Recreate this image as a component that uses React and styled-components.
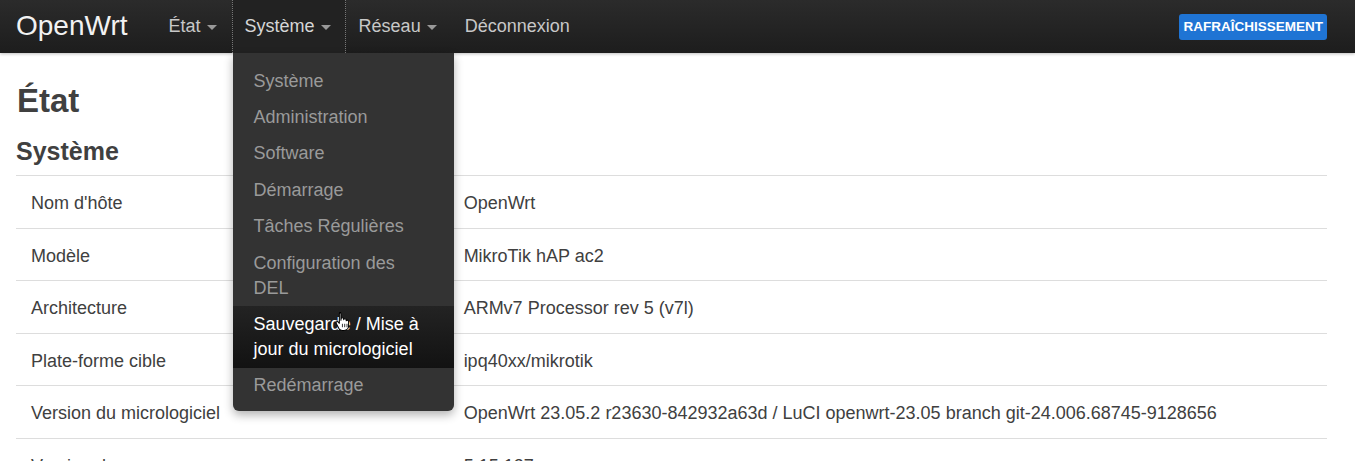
import React from "react";
import styled, { createGlobalStyle } from "styled-components";

const Global = createGlobalStyle`
  html, body { margin: 0; padding: 0; background: #fff; }
  body {
    font-family: "Liberation Sans", Arial, sans-serif;
    font-size: 18px;
    color: #404040;
    overflow: hidden;
  }
`;

const NavBar = styled.header`
  height: 53px;
  display: flex;
  align-items: stretch;
  padding: 0 28px 0 16px;
  background: linear-gradient(to bottom, #2b2b2b, #1d1d1d);
  box-shadow: 0 1px 3px rgba(0,0,0,0.25);
  position: relative;
  z-index: 5;
`;

const Brand = styled.a`
  color: #f2f2f2;
  font-size: 28px;
  display: flex;
  align-items: center;
  margin-right: 28px;
  text-decoration: none;
  padding-bottom: 1px;
`;

const NavList = styled.ul`
  display: flex;
  list-style: none;
  margin: 0;
  padding: 0;
  flex: 1;
`;

const NavItem = styled.li`
  position: relative;
  display: flex;
  align-items: center;
  padding: 0 14px 1px 12px;
  color: ${p => (p.$active ? "#d6d6d6" : "#c8c8c8")};
  background: ${p => (p.$active ? "#222" : "transparent")};
  border-left: 1px dotted ${p => (p.$active ? "#777" : "transparent")};
  border-right: 1px dotted ${p => (p.$active ? "#777" : "transparent")};
  font-size: 18px;
  white-space: nowrap;
`;

const Caret = styled.span`
  display: inline-block;
  width: 0;
  height: 0;
  margin-left: 6px;
  margin-top: 2px;
  border-left: 5px solid transparent;
  border-right: 5px solid transparent;
  border-top: 5px solid #999;
`;

const Dropdown = styled.ul`
  position: absolute;
  top: 100%;
  left: 0;
  width: 221px;
  margin: 0;
  padding: 10px 0 7px;
  list-style: none;
  background: #333;
  border-radius: 0 0 6px 6px;
  box-shadow: 0 4px 10px rgba(0,0,0,0.3);
  z-index: 10;
`;

const DropItem = styled.li`
  padding: 5.7px 21px;
  line-height: 25px;
  font-size: 18px;
  white-space: normal;
  color: ${p => (p.$hover ? "#fff" : "#9a9a9a")};
  background: ${p => (p.$hover ? "linear-gradient(to bottom, #232323, #121212)" : "transparent")};
  position: relative;
`;

const RefreshButton = styled.button`
  align-self: center;
  height: 26px;
  padding: 0 4px;
  border: none;
  border-radius: 3px;
  background: #1f74d4;
  color: #fff;
  font-family: "Liberation Sans", Arial, sans-serif;
  font-weight: bold;
  font-size: 13.5px;
`;

const Main = styled.main`
  padding: 0 28px 0 16px;
`;

const Title = styled.h2`
  margin: 28px 0 0 1px;
  font-size: 33px;
  line-height: 40px;
  font-weight: bold;
  color: #404040;
`;

const SectionTitle = styled.h3`
  margin: 15px 0 9px;
  font-size: 25px;
  line-height: 30px;
  font-weight: bold;
  color: #404040;
`;

const Table = styled.table`
  width: 100%;
  border-collapse: collapse;
`;

const Row = styled.tr`
  border-top: 1px solid #ddd;
`;

const Cell = styled.td`
  padding: 16px 15px 12px;
  line-height: 23.6px;
  font-size: 18px;
  color: #404040;
  width: ${p => p.$w || "auto"};
  vertical-align: top;
`;

const Pointer = styled.svg`
  position: absolute;
  left: 102px;
  top: 5px;
  pointer-events: none;
`;

const rows = [
  ["Nom d'hôte", "OpenWrt"],
  ["Modèle", "MikroTik hAP ac2"],
  ["Architecture", "ARMv7 Processor rev 5 (v7l)"],
  ["Plate-forme cible", "ipq40xx/mikrotik"],
  ["Version du micrologiciel", "OpenWrt 23.05.2 r23630-842932a63d / LuCI openwrt-23.05 branch git-24.006.68745-9128656"],
  ["Version du noyau", "5.15.137"],
];

const menu = [
  "Système",
  "Administration",
  "Software",
  "Démarrage",
  "Tâches Régulières",
  "Configuration des DEL",
  "Sauvegarde / Mise à jour du micrologiciel",
  "Redémarrage",
];

function HandCursor() {
  return (
    <Pointer width="16" height="21" viewBox="0 0 14 18">
      <path
        d="M4 1.2c.7 0 1.2.5 1.2 1.2V8l.1-1.3c.1-.6.6-1 1.2-1 .6 0 1.1.5 1.1 1.1v.6c.1-.5.6-.9 1.1-.9.6 0 1.1.5 1.1 1.1v.8c.2-.4.6-.6 1-.6.6 0 1.1.5 1.1 1.1v3.6c0 2.4-1.6 4.3-4 4.3H6.3c-1.3 0-2.2-.6-2.9-1.6L1.1 10.8c-.4-.6-.2-1.3.3-1.6.5-.3 1.1-.2 1.5.3l.9 1.1V2.4c0-.7.5-1.2 1.2-1.2z"
        fill="#fff"
        stroke="#000"
        strokeWidth="0.9"
        strokeLinejoin="round"
      />
      <path d="M6.5 11v3M8.5 11v3M10.5 11v3" stroke="#000" strokeWidth="0.7" />
    </Pointer>
  );
}

export default function App() {
  return (
    <>
      <Global />
      <NavBar>
        <Brand>OpenWrt</Brand>
        <NavList>
          <NavItem>État<Caret /></NavItem>
          <NavItem $active>
            Système<Caret />
            <Dropdown>
              {menu.map((m, i) => (
                <DropItem key={m} $hover={i === 6}>
                  {m}
                  {i === 6 && <HandCursor />}
                </DropItem>
              ))}
            </Dropdown>
          </NavItem>
          <NavItem>Réseau<Caret /></NavItem>
          <NavItem>Déconnexion</NavItem>
        </NavList>
        <RefreshButton>RAFRAÎCHISSEMENT</RefreshButton>
      </NavBar>
      <Main>
        <Title>État</Title>
        <SectionTitle>Système</SectionTitle>
        <Table>
          <tbody>
            {rows.map(([k, v]) => (
              <Row key={k}>
                <Cell $w="33%">{k}</Cell>
                <Cell>{v}</Cell>
              </Row>
            ))}
          </tbody>
        </Table>
      </Main>
    </>
  );
}
